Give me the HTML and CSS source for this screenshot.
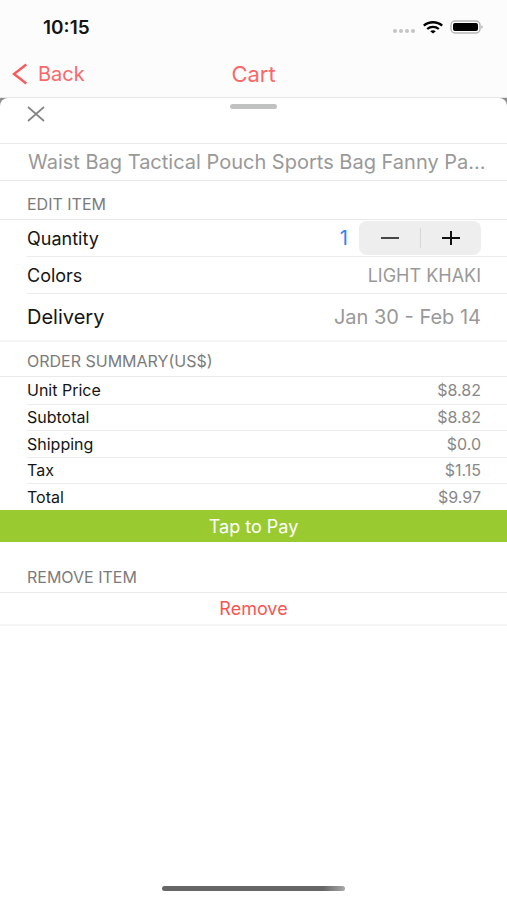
FILE: index.html
```html
<!DOCTYPE html>
<html lang="en">
<head>
<meta charset="utf-8">
<meta name="viewport" content="width=device-width, initial-scale=1">
<title>Cart</title>
<link rel="stylesheet" href="styles.css">
</head>
<body>
<div class="screen">
  <div class="top">
    <div class="status">
      <span class="time">10:15</span>
      <div class="status-icons">
        <svg width="24" height="6" viewBox="0 0 24 6" fill="#c4c4c4" aria-hidden="true"><circle cx="3" cy="3" r="2"/><circle cx="9" cy="3" r="2"/><circle cx="15" cy="3" r="2"/><circle cx="21" cy="3" r="2"/></svg>
        <svg width="20" height="13" viewBox="0 0 20 13" fill="none" stroke="#000" stroke-width="2.3" aria-hidden="true"><path d="M.8 4.700C6 .1 14 .1 19.200 4.700"/><path d="M4.200 8C7.400 5.200 12.600 5.200 15.800 8"/><path d="M10 12.600 7.200 10.200C8.800 8.900 11.200 8.900 12.800 10.200Z" fill="#000" stroke="none"/></svg>
        <svg width="34" height="14" viewBox="0 0 34 14" aria-hidden="true"><rect x="1" y="1" width="29" height="12" rx="4" fill="#fff" stroke="#b5b5b5" stroke-width="1.400"/><rect x="3" y="3" width="25" height="8" rx="2" fill="#000"/><path d="M31.500 5.200c1.500.6 1.500 3 0 3.600z" fill="#999"/></svg>
      </div>
    </div>
    <header class="nav">
      <a class="back" href="#"><svg width="16" height="22" viewBox="0 0 16 22" fill="none" stroke="#fb5a5b" stroke-width="2.400" aria-hidden="true"><path d="M14.300 1.500 2 11l12.300 9.500"/></svg>Back</a>
      <h1>Cart</h1>
    </header>
  </div>
  <main class="sheet-area">
    <div class="sheet">
      <div class="sheet-head">
        <button class="close" type="button" aria-label="Close"><svg width="18" height="16" viewBox="0 0 18 16" fill="none" stroke="#858585" stroke-width="1.700" aria-hidden="true"><path d="M1 1l16 14M17 1 1 15"/></svg></button>
        <span class="grabber"></span>
      </div>
      <p class="product">Waist Bag Tactical Pouch Sports Bag Fanny Pa...</p>
      <h2>EDIT ITEM</h2>
      <div class="rows">
        <div class="row">
          <span>Quantity</span>
          <div class="quantity">
            <output class="count">1</output>
            <div class="stepper">
              <button type="button" aria-label="Decrease quantity"><svg width="20" height="18" viewBox="0 0 20 18" stroke="#333" stroke-width="1.800" aria-hidden="true"><path d="M1 9h18"/></svg></button>
              <button type="button" aria-label="Increase quantity"><svg width="20" height="18" viewBox="0 0 20 18" stroke="#111" stroke-width="2" aria-hidden="true"><path d="M1 9h18M10 2v14"/></svg></button>
            </div>
          </div>
        </div>
        <div class="row"><span>Colors</span><span class="value">LIGHT KHAKI</span></div>
        <div class="row delivery"><span>Delivery</span><span class="value">Jan 30 - Feb 14</span></div>
      </div>
      <h2 class="summary-title">ORDER SUMMARY(US$)</h2>
      <div class="summary">
        <table>
          <tbody>
            <tr><th scope="row">Unit Price</th><td>$8.82</td></tr>
            <tr><th scope="row">Subtotal</th><td>$8.82</td></tr>
            <tr><th scope="row">Shipping</th><td>$0.0</td></tr>
            <tr><th scope="row">Tax</th><td>$1.15</td></tr>
            <tr><th scope="row">Total</th><td>$9.97</td></tr>
          </tbody>
        </table>
      </div>
      <button class="pay" type="button">Tap to Pay</button>
      <h2 class="remove-title">REMOVE ITEM</h2>
      <button class="remove" type="button">Remove</button>
    </div>
  </main>
  <div class="home"></div>
</div>
</body>
</html>
```
FILE: styles.css
```css
* { box-sizing: border-box; }
body {
  margin: 0;
  background: #fff;
  color: #151515;
  font-family: Inter, "Liberation Sans", sans-serif;
  font-size: 16px;
}
button {
  border: 0;
  padding: 0;
  background: none;
  font: inherit;
  cursor: pointer;
}
svg { display: block; }
.screen {
  display: flex;
  flex-direction: column;
  min-height: 100vh;
}
.top {
  background: #fcfcfc;
  border-bottom: 1px solid #e6e6e6;
}
.status {
  display: flex;
  justify-content: space-between;
  align-items: center;
  height: 54px;
  padding: 0 23px 0 43px;
}
.time { font-size: 19px; font-weight: 600; }
.status-icons { display: flex; align-items: center; gap: 7px; }
.status-icons svg:first-child { margin-top: 8px; }
.nav {
  display: grid;
  grid-template-columns: 1fr auto 1fr;
  align-items: center;
  height: 43px;
  padding: 0 12px 3px;
  color: #fb686a;
}
.back {
  display: flex;
  align-items: center;
  gap: 10px;
  color: inherit;
  font-size: 20px;
  text-decoration: none;
}
h1 { margin: 0; font-size: 22px; font-weight: 400; }
.sheet-area {
  display: flex;
  flex: 1;
  background: linear-gradient(#8d8d8d 20px, #fff 20px);
}
.sheet {
  flex: 1;
  min-width: 0;
  background: #fff;
  border-radius: 8px 8px 0 0;
}
.sheet-head {
  display: grid;
  grid-template-columns: 1fr auto 1fr;
  height: 46px;
  padding: 0 27px;
  border-bottom: 1px solid #e9e9e9;
}
.close { justify-self: start; align-self: start; margin-top: 8px; }
.grabber {
  width: 47px;
  height: 5px;
  margin-top: 6px;
  border-radius: 3px;
  background: #c0c2c1;
}
.product {
  margin: 0;
  height: 37px;
  padding: 0 20px 0 28px;
  border-bottom: 1px solid #e9e9e9;
  color: #999;
  font-size: 20px;
  line-height: 36px;
  white-space: nowrap;
  overflow: hidden;
  text-overflow: ellipsis;
}
h2 {
  margin: 0;
  height: 39px;
  padding: 8px 27px 0;
  border-bottom: 1px solid #e9e9e9;
  color: #7b7b7b;
  font-size: 16px;
  font-weight: 400;
  line-height: 30px;
}
.rows { padding-left: 27px; }
.row {
  display: flex;
  justify-content: space-between;
  align-items: center;
  height: 37px;
  padding-right: 26px;
  border-bottom: 1px solid #ececec;
  font-size: 18px;
}
.value { color: #999; }
.delivery { height: 46px; border-bottom: 0; font-size: 20px; }
.quantity { display: flex; align-items: center; gap: 11px; }
.count { color: #2b83f6; font-size: 20px; }
.stepper {
  display: flex;
  width: 122px;
  height: 34px;
  border-radius: 8px;
  background: #eee;
}
.stepper button {
  display: flex;
  flex: 1;
  align-items: center;
  justify-content: center;
}
.stepper button + button::before {
  content: "";
  width: 1px;
  height: 20px;
  margin-right: 20px;
  background: #d5d5d5;
}
.stepper button + button { justify-content: flex-start; }
.summary-title { height: 37px; padding-top: 4px; border-top: 2px solid #f5f5f5; }
.summary { padding-left: 27px; }
table { width: 100%; border-collapse: collapse; }
th, td { height: 27px; padding: 0; font-size: 16px; line-height: 20px; }
tr:nth-child(even) > * { height: 26px; }
th { text-align: left; font-weight: 400; }
td { padding-right: 26px; color: #888; text-align: right; }
tr + tr { border-top: 1px solid #ececec; }
.pay {
  display: block;
  width: 100%;
  height: 32px;
  background: #99cb31;
  color: #fff;
  font-size: 18px;
}
.remove-title { height: 51px; padding-top: 20px; }
.remove {
  display: block;
  width: 100%;
  height: 33px;
  border-bottom: 2px solid #f5f5f5;
  color: #f95455;
  font-size: 18px;
}
.home {
  align-self: center;
  width: 36%;
  height: 5px;
  margin-bottom: 9px;
  border-radius: 3px;
  background: linear-gradient(90deg, #666 88%, #aaa);
}
```
